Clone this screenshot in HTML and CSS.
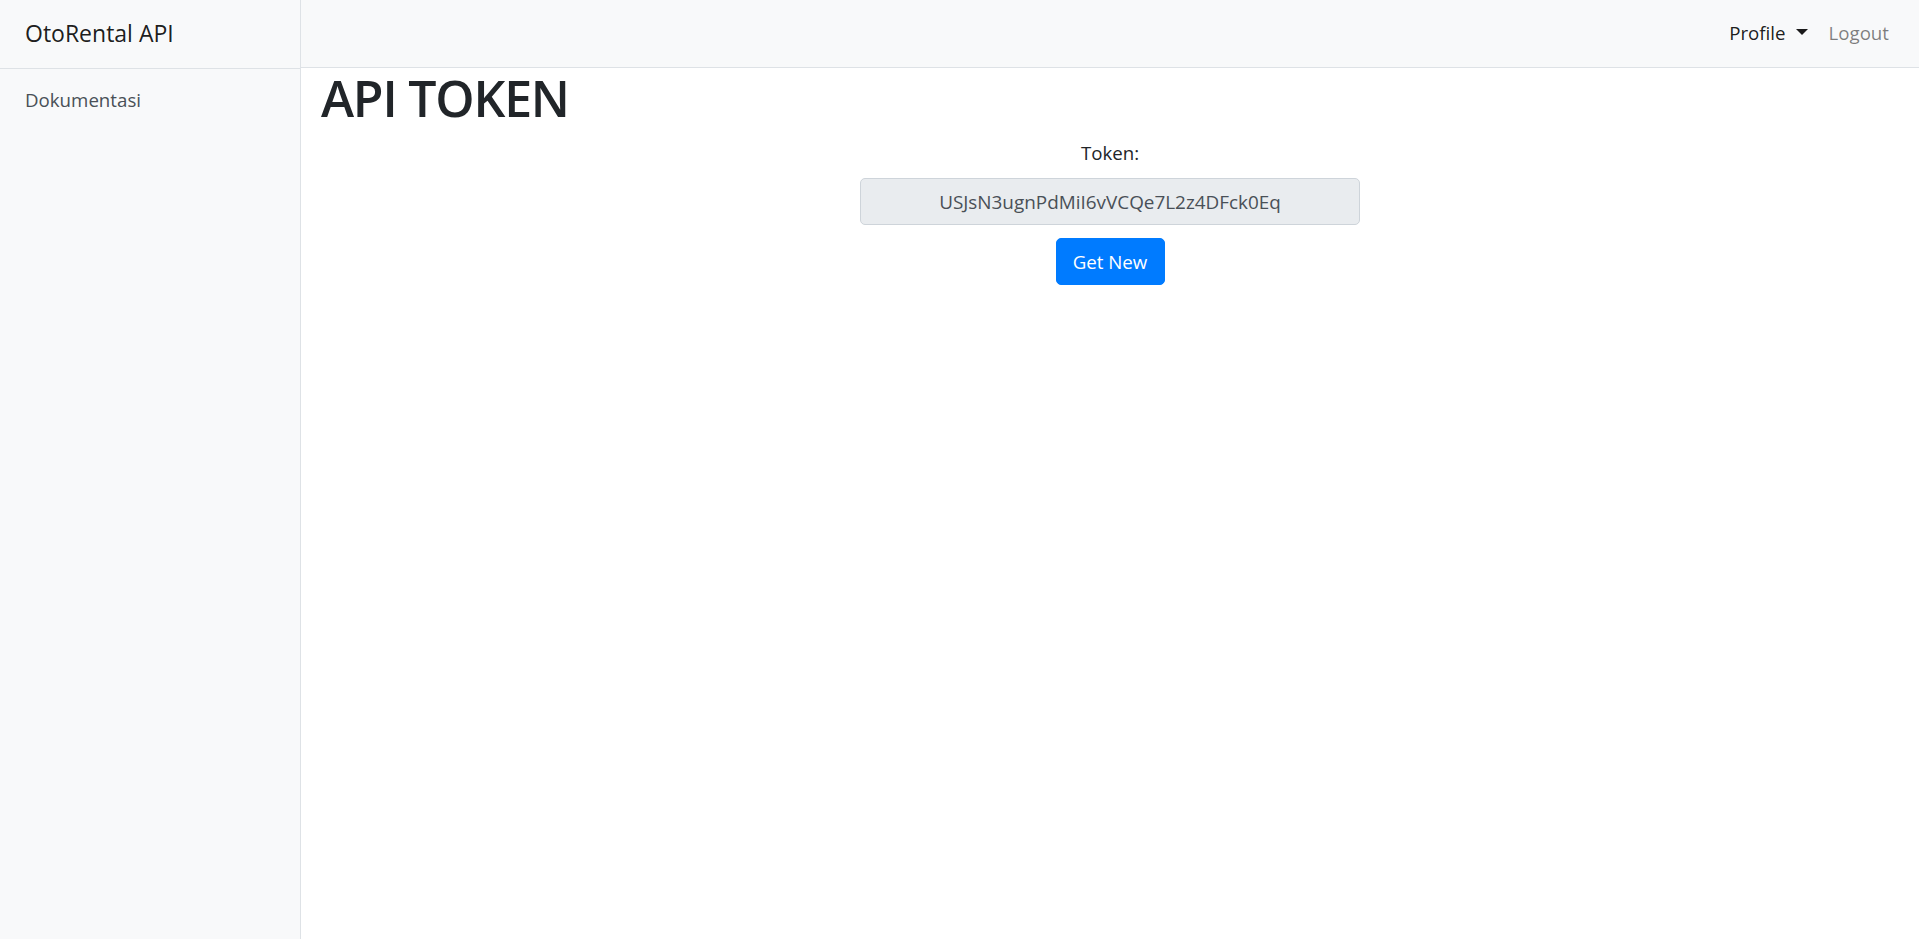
FILE: index.html
```html
<!DOCTYPE html>
<html lang="id">
<head>
<meta charset="utf-8">
<title>OtoRental API</title>
<link rel="stylesheet" href="styles.css">
</head>
<body>
<div class="layout">
  <aside class="sidebar">
    <div class="sidebar-brand">OtoRental API</div>
    <nav class="sidebar-nav">
      <a class="sidebar-link" href="#">Dokumentasi</a>
    </nav>
  </aside>
  <div class="main">
    <header class="topbar">
      <a class="top-link top-link-active" href="#">Profile<span class="caret"></span></a>
      <a class="top-link top-link-muted" href="#">Logout</a>
    </header>
    <section class="content">
      <h1 class="page-title">API TOKEN</h1>
      <div class="token-block">
        <label class="token-label" for="token">Token:</label>
        <input class="token-input" id="token" type="text" readonly value="USJsN3ugnPdMiI6vVCQe7L2z4DFck0Eq">
        <button class="btn-primary" type="button">Get New</button>
      </div>
    </section>
  </div>
</div>
</body>
</html>
```

FILE: styles.css
```css
* { box-sizing: border-box; }

html, body {
  margin: 0;
  padding: 0;
  height: 100%;
}

body {
  font-family: "Open Sans", "Noto Sans", sans-serif;
  font-size: 18.7px;
  line-height: 30px;
  color: #212529;
  background: #ffffff;
}

.layout {
  display: flex;
  min-height: 939px;
}

.sidebar {
  width: 301px;
  flex: 0 0 301px;
  background: #f8f9fa;
  border-right: 1px solid #dee2e6;
  display: flex;
  flex-direction: column;
}

.sidebar-brand {
  height: 69px;
  padding: 15px 0 0 25px;
  font-size: 23px;
  line-height: 37.5px;
  color: rgba(0, 0, 0, 0.9);
  border-bottom: 1px solid #dee2e6;
  white-space: nowrap;
}

.sidebar-nav {
  display: flex;
  flex-direction: column;
  padding-top: 16px;
}

.sidebar-link {
  padding: 0 25px;
  line-height: 30px;
  color: #495057;
  text-decoration: none;
}

.main {
  flex: 1 1 auto;
  display: flex;
  flex-direction: column;
  min-width: 0;
}

.topbar {
  height: 68px;
  background: #f8f9fa;
  border-bottom: 1px solid #dee2e6;
  display: flex;
  justify-content: flex-end;
  align-items: flex-start;
  padding: 18px 20px 0 0;
}

.top-link {
  display: flex;
  align-items: center;
  padding: 0 10px;
  line-height: 30px;
  text-decoration: none;
}

.top-link-active { color: rgba(0, 0, 0, 0.9); }
.top-link-muted { color: rgba(0, 0, 0, 0.5); }

.caret {
  display: inline-block;
  margin-left: 11px;
  width: 0;
  height: 0;
  border-top: 6px solid #1a1a1a;
  border-left: 6px solid transparent;
  border-right: 6px solid transparent;
  position: relative;
  top: -1px;
}

.content {
  padding: 0 20px;
}

.page-title {
  margin: 0 0 10px 0;
  font-size: 50px;
  font-weight: 600;
  letter-spacing: -1.2px;
  line-height: 60px;
  color: #212529;
}

.token-block {
  display: flex;
  flex-direction: column;
  align-items: center;
}

.token-label {
  display: block;
  margin-bottom: 10px;
  line-height: 30px;
  color: #212529;
}

.token-input {
  width: 500px;
  height: 47px;
  padding: 7px 15px;
  font-family: inherit;
  font-size: 18.9px;
  color: #495057;
  text-align: center;
  background: #e9ecef;
  border: 1px solid #ced4da;
  border-radius: 5px;
  outline: none;
}

.btn-primary {
  margin-top: 13px;
  width: 109px;
  height: 47px;
  padding: 0;
  font-family: inherit;
  font-size: 18.7px;
  color: #ffffff;
  background: #007bff;
  border: 1px solid #007bff;
  border-radius: 5px;
  cursor: pointer;
}
```
